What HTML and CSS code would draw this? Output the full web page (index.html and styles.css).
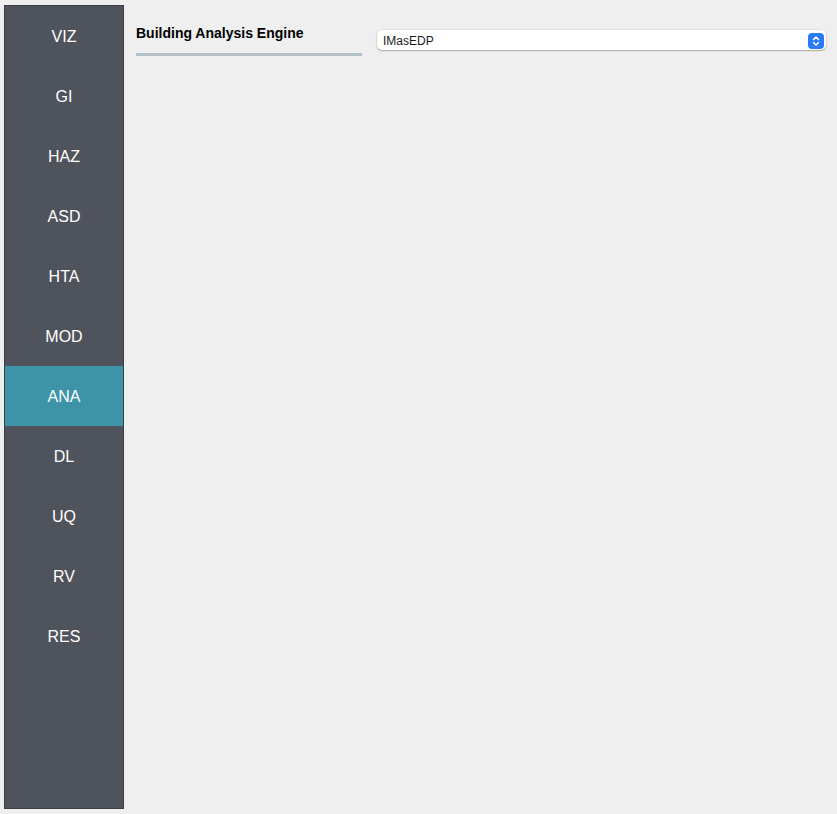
FILE: index.html
```html
<!DOCTYPE html>
<html>
<head>
<meta charset="utf-8">
<link rel="stylesheet" href="styles.css">
</head>
<body>
<div class="app">
  <nav class="sidebar">
    <div class="nav-item">VIZ</div>
    <div class="nav-item">GI</div>
    <div class="nav-item">HAZ</div>
    <div class="nav-item">ASD</div>
    <div class="nav-item">HTA</div>
    <div class="nav-item">MOD</div>
    <div class="nav-item active">ANA</div>
    <div class="nav-item">DL</div>
    <div class="nav-item">UQ</div>
    <div class="nav-item">RV</div>
    <div class="nav-item">RES</div>
  </nav>
  <main class="content">
    <div class="row">
      <div class="label-box">
        <div class="label">Building Analysis Engine</div>
        <div class="underline"></div>
      </div>
      <div class="select">
        <span class="select-text">IMasEDP</span>
        <span class="stepper">
          <svg width="16" height="16" viewBox="0 0 16 16">
            <path d="M5.5 6.5 L8 4 L10.5 6.5" fill="none" stroke="#fff" stroke-width="1.5" stroke-linecap="round" stroke-linejoin="round"/>
            <path d="M5.5 9.5 L8 12 L10.5 9.5" fill="none" stroke="#fff" stroke-width="1.5" stroke-linecap="round" stroke-linejoin="round"/>
          </svg>
        </span>
      </div>
    </div>
  </main>
</div>
</body>
</html>
```
FILE: styles.css
```css
html, body {
  margin: 0;
  padding: 0;
  background: #efefef;
  font-family: "Liberation Sans", Arial, sans-serif;
}
.app {
  display: flex;
  height: 814px;
  padding: 5px 11px 5px 4px;
  box-sizing: border-box;
}
.sidebar {
  width: 120px;
  height: 804px;
  box-sizing: border-box;
  background: #4f535b;
  border: 1px solid #3a3d43;
  display: flex;
  flex-direction: column;
  flex-shrink: 0;
}
.nav-item {
  height: 60px;
  box-sizing: border-box;
  padding-top: 2px;
  flex-shrink: 0;
  display: flex;
  align-items: center;
  justify-content: center;
  color: #ffffff;
  font-size: 16px;
}
.nav-item.active {
  background: #3d93a7;
}
.content {
  flex: 1;
  padding-left: 12px;
}
.row {
  display: flex;
  align-items: flex-start;
  gap: 14px;
  padding-top: 20px;
}
.label-box {
  width: 226px;
  flex-shrink: 0;
}
.label {
  font-weight: bold;
  font-size: 14px;
  color: #000;
  height: 28px;
  line-height: 16px;
}
.underline {
  height: 3px;
  background: #b3c0c8;
}
.select {
  flex: 1;
  margin-top: 5px;
  margin-left: 1px;
  height: 20px;
  box-sizing: border-box;
  background: #fff;
  border-radius: 5px;
  box-shadow: 0 0 0 0.5px rgba(0,0,0,0.12), 0 1px 1.5px rgba(0,0,0,0.25);
  display: flex;
  align-items: center;
  justify-content: space-between;
  padding: 1px 2px 0 6px;
}
.select-text {
  font-size: 12px;
  color: #1a1a1a;
}
.stepper {
  width: 16px;
  height: 16px;
  border-radius: 4px;
  background: #2a7bf5;
  display: flex;
}
```
